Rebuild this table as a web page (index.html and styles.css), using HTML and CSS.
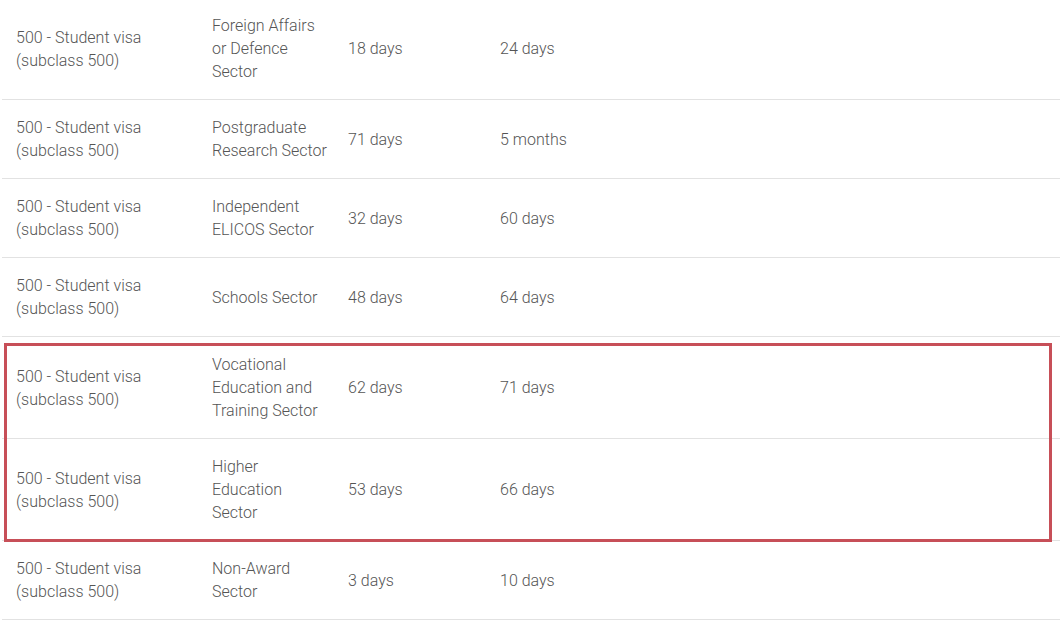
FILE: index.html
```html
<!DOCTYPE html>
<html>
  <head>
    <title>Visa processing times</title>
    <link rel="stylesheet" href="styles.css">
  </head>
  <body>
    <div class="table-wrap">
      <table class="times">
        <tr>
          <td class="visa">500 - Student visa (subclass 500)</td>
          <td class="sector">Foreign Affairs or Defence Sector</td>
          <td class="p75">18 days</td>
          <td class="p90">24 days</td>
        </tr>
        <tr>
          <td class="visa">500 - Student visa (subclass 500)</td>
          <td class="sector">Postgraduate Research Sector</td>
          <td class="p75">71 days</td>
          <td class="p90">5 months</td>
        </tr>
        <tr>
          <td class="visa">500 - Student visa (subclass 500)</td>
          <td class="sector">Independent ELICOS Sector</td>
          <td class="p75">32 days</td>
          <td class="p90">60 days</td>
        </tr>
        <tr>
          <td class="visa">500 - Student visa (subclass 500)</td>
          <td class="sector">Schools Sector</td>
          <td class="p75">48 days</td>
          <td class="p90">64 days</td>
        </tr>
        <tr>
          <td class="visa">500 - Student visa (subclass 500)</td>
          <td class="sector">Vocational Education and Training Sector</td>
          <td class="p75">62 days</td>
          <td class="p90">71 days</td>
        </tr>
        <tr>
          <td class="visa">500 - Student visa (subclass 500)</td>
          <td class="sector">Higher Education Sector</td>
          <td class="p75">53 days</td>
          <td class="p90">66 days</td>
        </tr>
        <tr>
          <td class="visa">500 - Student visa (subclass 500)</td>
          <td class="sector">Non-Award Sector</td>
          <td class="p75">3 days</td>
          <td class="p90">10 days</td>
        </tr>
      </table>
      <div class="highlight"></div>
    </div>
  </body>
</html>
```

FILE: styles.css
```css
body {
  margin: 0;
  background: #fff;
  font-family: Roboto, "Liberation Sans", sans-serif;
  font-weight: 300;
  font-size: 16px;
  color: #555;
}
.table-wrap {
  position: relative;
  margin-top: -2px;
}
.times {
  border-collapse: collapse;
  margin-left: 2px;
  width: 1058px;
  table-layout: fixed;
}
.times td {
  padding: 16px 0 16px 14px;
  line-height: 23px;
  vertical-align: middle;
  border-bottom: 1px solid #e2e2e2;
}
.visa {
  width: 182px;
}
.sector {
  width: 116px;
  padding-right: 6px !important;
}
.p75 {
  width: 138px;
}
.highlight {
  position: absolute;
  top: 345px;
  left: 4px;
  width: 1048px;
  height: 199px;
  box-sizing: border-box;
  border: 3px solid #c74f58;
}
```
